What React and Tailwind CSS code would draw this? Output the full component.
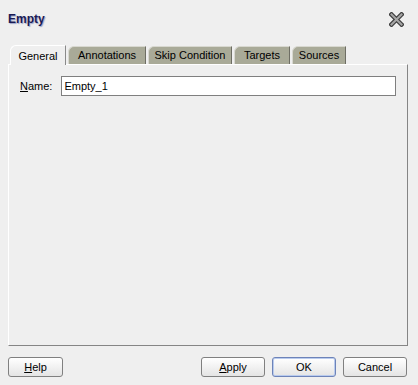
import React from 'react';

const TABS = ['Annotations', 'Skip Condition', 'Targets', 'Sources'];
const TAB_W = [78, 84, 56, 54];

function Btn({ label, ul, w, ok }) {
  const i = label.indexOf(ul);
  return (
    <button
      className={`h-[20px] rounded-[3px] border text-[11px] text-black bg-gradient-to-b from-white to-[#e4e4e4] flex items-center justify-center ${ok ? 'border-[#6d83b8] shadow-[inset_0_0_0_1px_#b9cbee]' : 'border-[#808080]'}`}
      style={{ width: w }}
    >
      {ul ? (
        <span>
          {label.slice(0, i)}
          <span className="underline">{ul}</span>
          {label.slice(i + 1)}
        </span>
      ) : (
        label
      )}
    </button>
  );
}

export default function App() {
  return (
    <div className="w-[418px] h-[385px] bg-[#efefef] flex flex-col font-['Liberation_Sans',Arial,sans-serif] text-[11px] text-black overflow-hidden">
      {/* title */}
      <div className="h-[37px] flex items-center justify-between pl-[8px] pr-[14px] pt-[1px]">
        <span className="font-bold text-[12px] text-[#1b1b55] [text-shadow:1px_1px_1px_#9aa4c8]">Empty</span>
        <svg width="15" height="15" viewBox="0 0 15 15">
          <path d="M2.5 2.5 L12.5 12.5 M12.5 2.5 L2.5 12.5" stroke="#3f3f3f" strokeWidth="4.5" strokeLinecap="square" />
          <path d="M2.5 2.5 L12.5 12.5 M12.5 2.5 L2.5 12.5" stroke="#a6a6a6" strokeWidth="2" strokeLinecap="square" />
        </svg>
      </div>

      {/* tabs */}
      <div className="h-[19px] flex items-end pl-[10px] gap-[2px] mt-[8px] relative z-10">
        <div className="w-[56px] h-[20px] -mb-[1px] bg-[#efefef] border-l border-t border-white border-r-[#8a8a8a] border-r rounded-tl-[6px] flex items-center justify-center pt-[1px]">
          General
        </div>
        {TABS.map((t, i) => (
          <div
            key={t}
            className="h-[18px] bg-[#a9aa98] border-l border-t border-[#d8d8d0] border-r border-r-[#6e6e64] rounded-tl-[6px] flex items-center justify-center"
            style={{ width: TAB_W[i] }}
          >
            {t}
          </div>
        ))}
      </div>

      {/* panel */}
      <div className="mx-[8px] w-[400px] h-[282px] border-t border-l border-white border-r border-b border-r-[#858585] border-b-[#858585] pt-[11px] pl-[11px]">
        <div className="flex items-center gap-[9px]">
          <span>
            <span className="underline">N</span>ame:
          </span>
          <div className="w-[335px] h-[20px] border border-[#7f7f7f] bg-white flex items-center pl-[2px]">
            Empty_1
          </div>
        </div>
      </div>

      {/* buttons */}
      <div className="flex items-center px-[8px] mt-[11px]">
        <Btn label="Help" ul="H" w={55} />
        <div className="flex-1" />
        <div className="flex gap-[7px] pr-[3px]">
          <Btn label="Apply" ul="A" w={64} />
          <Btn label="OK" w={64} ok />
          <Btn label="Cancel" w={64} />
        </div>
      </div>
    </div>
  );
}
